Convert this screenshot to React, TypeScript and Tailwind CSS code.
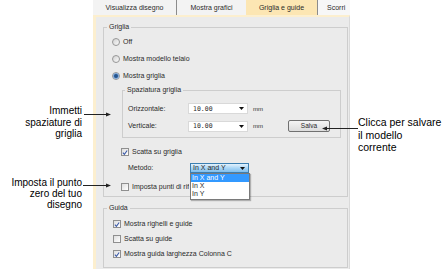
import React from "react"

const Radio: React.FC<{ checked?: boolean; label: string }> = ({ checked, label }) => (
  <div className="flex h-[10px] items-center gap-[3px]">
    <span className="flex h-[8px] w-[8px] items-center justify-center rounded-full border border-[#979797] bg-gradient-to-br from-[#d2d2d2] to-[#fbfbfb]">
      {checked && <span className="h-[4px] w-[4px] rounded-full bg-[#24558f] ring-1 ring-[#7fa6d6]" />}
    </span>
    <span>{label}</span>
  </div>
)

const Check: React.FC<{ checked?: boolean }> = ({ checked }) => (
  <span className="flex h-[8px] w-[8px] shrink-0 items-center justify-center border border-[#8f8f8f] bg-gradient-to-br from-[#dedede] to-white">
    {checked && (
      <svg width="7" height="7" viewBox="0 0 7 7">
        <path d="M1 3.6 L2.8 5.6 L6 1.2" fill="none" stroke="#3b5aa8" strokeWidth="1.3" />
      </svg>
    )}
  </span>
)

const Caret: React.FC = () => (
  <svg width="5" height="3" viewBox="0 0 5 3">
    <path d="M0 0 H5 L2.5 3 Z" fill="#111" />
  </svg>
)

const Field: React.FC<{ value: string }> = ({ value }) => (
  <div className="flex h-[11px] w-[60px] items-center justify-between border border-[#d9d9d9] bg-white pl-[4px] pr-[3px]">
    <span className="font-['DejaVu_Sans_Mono',monospace] text-[6.5px]">{value}</span>
    <Caret />
  </div>
)

const App: React.FC = () => {
  return (
    <div className="relative h-[269px] w-[448px] overflow-hidden bg-white font-['Liberation_Sans',Arial,sans-serif]">
      <div className="ml-[93px] w-[257px] text-[7px] leading-[8px] text-[#2a2a2a]">
        {/* tabs */}
        <div className="flex h-[15px] bg-[#f3f3f3]">
          <div className="flex w-[84px] items-center justify-center border-r border-[#8c8c8c]">Visualizza disegno</div>
          <div className="flex w-[69px] items-center justify-center">Mostra grafici</div>
          <div className="flex w-[72px] items-center justify-center border-r border-[#8c8c8c] bg-[#fce6b3]">Griglia e guide</div>
          <div className="flex flex-1 items-center overflow-hidden whitespace-nowrap pl-[9px] bg-[#f7f7f7]">Scorri</div>
        </div>

        {/* content */}
        <div className="h-[254px] border-l-[3px] border-t-[2px] border-r border-[#fcefcf] border-r-[#dadada] bg-[#ebebeb]">
          <fieldset className="ml-[7px] mt-[6px] w-[245px] border border-[#cdcdcd] pb-[4px]">
            <legend className="ml-[3px] px-[2px]">Griglia</legend>
            <div className="ml-[8px] mt-[6px] flex flex-col gap-[7px]">
              <Radio label="Off" />
              <Radio label="Mostra modello telaio" />
              <Radio checked label="Mostra griglia" />
            </div>

            <fieldset className="ml-[18px] mt-[5px] w-[219px] border border-[#cdcdcd] pb-[5px]">
              <legend className="ml-[2px] px-[2px]">Spaziatura griglia</legend>
              <div className="mt-[9px] flex flex-col gap-[6px]">
                <div className="flex items-center">
                  <span className="ml-[5px] w-[60px]">Orizzontale:</span>
                  <Field value="10.00" />
                  <span className="ml-[5px] w-[35px] text-[6px]">mm</span>
                </div>
                <div className="flex items-center">
                  <span className="ml-[5px] w-[60px]">Verticale:</span>
                  <Field value="10.00" />
                  <span className="ml-[5px] w-[35px] text-[6px]">mm</span>
                  <button className="flex h-[12px] w-[42px] items-center justify-center rounded-[2px] border border-[#707070] bg-gradient-to-b from-[#f4f4f4] to-[#dcdcdc] text-[6.5px]">
                    Salva
                  </button>
                </div>
              </div>
            </fieldset>

            <div className="ml-[17px] mt-[9px] flex h-[10px] items-center gap-[3px]">
              <Check checked />
              <span>Scatta su griglia</span>
            </div>

            <div className="mt-[6px] flex h-[10px] items-center">
              <span className="ml-[24px] w-[62px]">Metodo:</span>
              <div className="relative">
                <div className="flex h-[10px] w-[59px] items-center justify-between border border-[#3c7fb1] bg-gradient-to-b from-[#e3f2fd] via-[#aad6f6] to-[#7fbfee] pl-[2px] pr-[3px]">
                  <span>In X and Y</span>
                  <Caret />
                </div>
                <div className="absolute left-0 top-full z-10 flex h-[27px] w-[60px] flex-col border border-[#7a7a7a] bg-white shadow-[1px_1px_1px_rgba(0,0,0,0.25)]">
                  <span className="h-[8px] bg-[#3399ff] pl-[1px] text-white">In X and Y</span>
                  <span className="h-[8px] pl-[1px]">In X</span>
                  <span className="h-[8px] pl-[1px]">In Y</span>
                </div>
              </div>
            </div>

            <div className="ml-[17px] mt-[9px] flex h-[10px] items-center gap-[3px]">
              <Check />
              <span className="block w-[57px] overflow-hidden whitespace-nowrap">Imposta punti di riferimento</span>
            </div>
          </fieldset>

          <fieldset className="ml-[7px] mt-[7px] w-[245px] border border-[#cdcdcd] pb-[8px]">
            <legend className="ml-[3px] px-[2px]">Guida</legend>
            <div className="ml-[9px] mt-[7px] flex flex-col gap-[5px]">
              <div className="flex h-[10px] items-center gap-[3px]">
                <Check checked />
                <span>Mostra righelli e guide</span>
              </div>
              <div className="flex h-[10px] items-center gap-[3px]">
                <Check />
                <span>Scatta su guide</span>
              </div>
              <div className="flex h-[10px] items-center gap-[3px]">
                <Check checked />
                <span>Mostra guida larghezza Colonna C</span>
              </div>
            </div>
          </fieldset>
        </div>
      </div>

      {/* callouts */}
      <div className="absolute left-0 top-[105px] w-[82px] text-right text-[10px] leading-[11.5px] text-black">
        Immetti
        <br />
        spaziature di
        <br />
        griglia
      </div>
      <div className="absolute left-0 top-[177px] w-[82px] text-right text-[10px] leading-[11px] text-black">
        Imposta il punto
        <br />
        zero del tuo
        <br />
        disegno
      </div>
      <div className="absolute left-[358px] top-[116px] text-[10.5px] leading-[12.5px] text-black">
        Clicca per salvare
        <br />
        il modello
        <br />
        corrente
      </div>

      <svg className="pointer-events-none absolute left-0 top-0" width="448" height="269" viewBox="0 0 448 269">
        <path d="M84 114.5 H107" stroke="#222" strokeWidth="1" />
        <path d="M111 114.5 L106 112.5 L106 116.5 Z" fill="#222" />
        <path d="M83 185.5 H107" stroke="#222" strokeWidth="1" />
        <path d="M111 185.5 L106 183.5 L106 187.5 Z" fill="#222" />
        <path d="M358 128.5 H326" stroke="#222" strokeWidth="1" />
        <path d="M322 128.5 L327 126.5 L327 130.5 Z" fill="#222" />
      </svg>
    </div>
  )
}

export default App
